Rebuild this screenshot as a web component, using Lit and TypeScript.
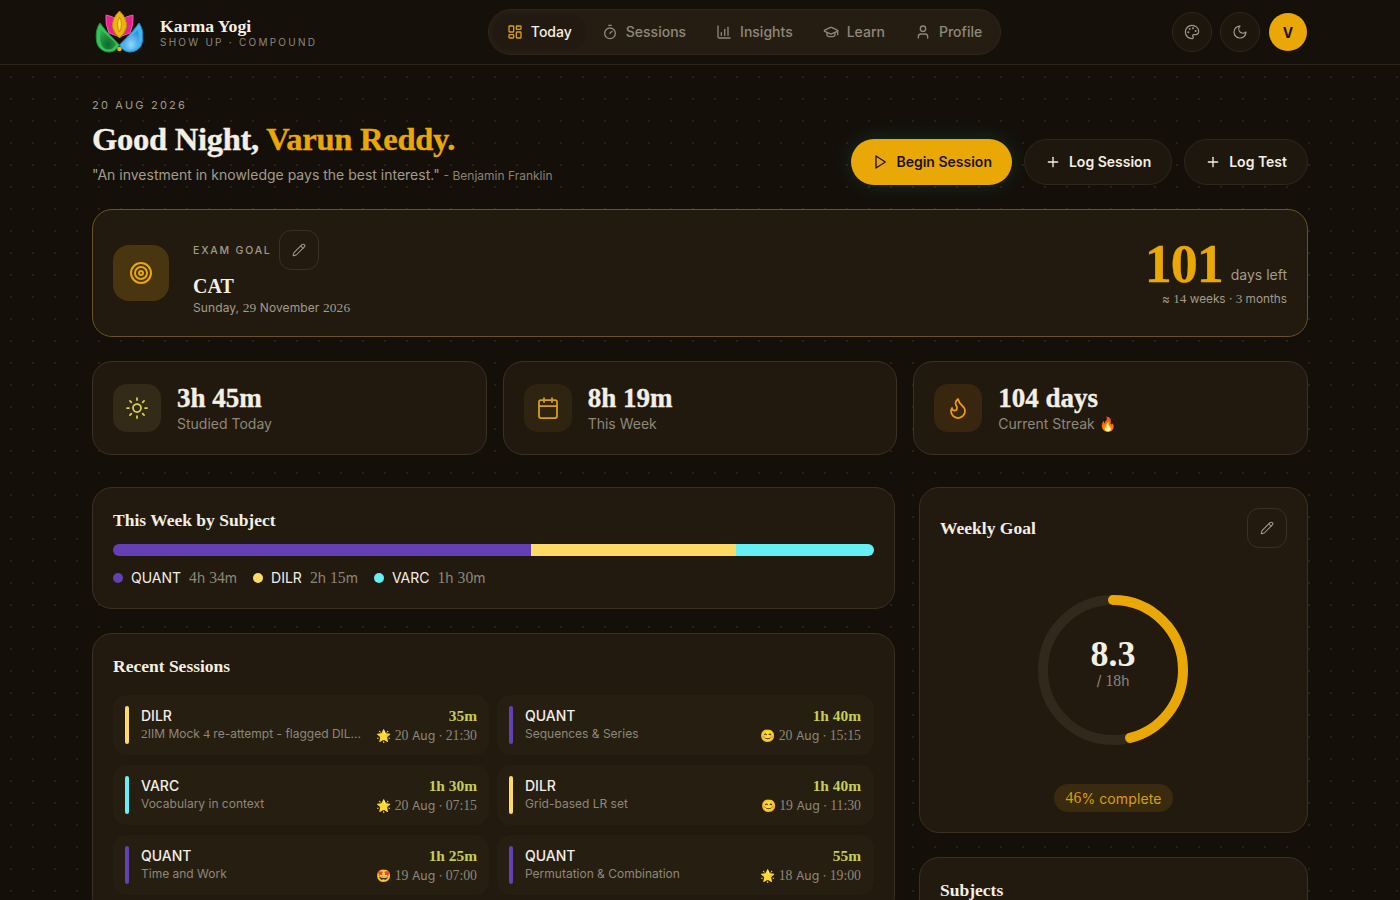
import { LitElement, html, css, svg } from "lit";
import { customElement } from "lit/decorators.js";

const ic = (body: unknown, size = 16, sw = 2) => html`<svg class="ic" width=${size} height=${size} viewBox="0 0 24 24" fill="none" stroke="currentColor" stroke-width=${sw} stroke-linecap="round" stroke-linejoin="round">${body}</svg>`;

const I = {
  dash: svg`<rect x="3" y="3" width="7" height="9" rx="1"/><rect x="14" y="3" width="7" height="5" rx="1"/><rect x="14" y="12" width="7" height="9" rx="1"/><rect x="3" y="16" width="7" height="5" rx="1"/>`,
  timer: svg`<line x1="10" x2="14" y1="2" y2="2"/><line x1="12" x2="15" y1="14" y2="11"/><circle cx="12" cy="14" r="8"/>`,
  chart: svg`<path d="M3 3v16a2 2 0 0 0 2 2h16"/><path d="M8 17v-4"/><path d="M13 17V8"/><path d="M18 17V5"/>`,
  cap: svg`<path d="M21.42 10.922a1 1 0 0 0-.019-1.838L12.83 5.18a2 2 0 0 0-1.66 0L2.6 9.08a1 1 0 0 0 0 1.832l8.57 3.908a2 2 0 0 0 1.66 0z"/><path d="M22 10v6"/><path d="M6 12.5V16a6 3 0 0 0 12 0v-3.5"/>`,
  user: svg`<path d="M19 21v-2a4 4 0 0 0-4-4H9a4 4 0 0 0-4 4v2"/><circle cx="12" cy="7" r="4"/>`,
  palette: svg`<path d="M12 22a1 1 0 0 1 0-20 10 9 0 0 1 10 9 5 5 0 0 1-5 5h-2.25a1.75 1.75 0 0 0-1.4 2.8l.3.4a1.75 1.75 0 0 1-1.4 2.8z"/><circle cx="13.5" cy="6.5" r=".6" fill="currentColor"/><circle cx="17.5" cy="10.5" r=".6" fill="currentColor"/><circle cx="6.5" cy="12.5" r=".6" fill="currentColor"/><circle cx="8.5" cy="7.5" r=".6" fill="currentColor"/>`,
  moon: svg`<path d="M12 3a6 6 0 0 0 9 9 9 9 0 1 1-9-9Z"/>`,
  play: svg`<polygon points="6 3 20 12 6 21 6 3"/>`,
  plus: svg`<path d="M5 12h14"/><path d="M12 5v14"/>`,
  pencil: svg`<path d="M21.174 6.812a1 1 0 0 0-3.986-3.987L3.842 16.174a2 2 0 0 0-.5.83l-1.321 4.352a.5.5 0 0 0 .623.622l4.353-1.32a2 2 0 0 0 .83-.497z"/><path d="m15 5 4 4"/>`,
  target: svg`<circle cx="12" cy="12" r="10"/><circle cx="12" cy="12" r="6"/><circle cx="12" cy="12" r="2"/>`,
  sun: svg`<circle cx="12" cy="12" r="4"/><path d="M12 2v2"/><path d="M12 20v2"/><path d="m4.93 4.93 1.41 1.41"/><path d="m17.66 17.66 1.41 1.41"/><path d="M2 12h2"/><path d="M20 12h2"/><path d="m6.34 17.66-1.41 1.41"/><path d="m19.07 4.93-1.41 1.41"/>`,
  cal: svg`<path d="M8 2v4"/><path d="M16 2v4"/><rect x="3" y="4" width="18" height="18" rx="2"/><path d="M3 10h18"/>`,
  flame: svg`<path d="M8.5 14.5A2.5 2.5 0 0 0 11 12c0-1.38-.5-2-1-3-1.072-2.143-.224-4.054 2-6 .5 2.5 2 4.9 4 6.5 2 1.6 3 3.5 3 5.5a7 7 0 1 1-14 0c0-1.153.433-2.294 1-3a2.5 2.5 0 0 0 2.5 2.5z"/>`,
};

const d = (s: string) => s.split(/(\d[\d:]*)/).map((p, i) => (i % 2 ? html`<span class="dg">${p}</span>` : p));

const Logo = () => html`<svg class="logo" width="50" height="44" viewBox="0 0 50 44">
  <defs>
    <radialGradient id="gg" cx=".5" cy=".75" r=".7"><stop offset="0" stop-color="#0f6a2c"/><stop offset="1" stop-color="#2ba548"/></radialGradient>
    <radialGradient id="bg" cx=".5" cy=".75" r=".7"><stop offset="0" stop-color="#8fd8fb"/><stop offset="1" stop-color="#2e93dc"/></radialGradient>
  </defs>
  <path d="M11 5 Q18 6 22 10 L25 27 L14 23 Q10 14 11 5Z" fill="#e3238e" stroke="#f05ab0" stroke-width="1"/>
  <path d="M38 5 Q31 6 27 10 L24 27 L35 23 Q39 14 38 5Z" fill="#e3238e" stroke="#f05ab0" stroke-width="1"/>
  <path d="M24.5 1 Q32 8 31.5 17 Q30 23 24.5 28 Q19 23 17.5 17 Q17 8 24.5 1Z" fill="#edb40e" stroke="#c08a08" stroke-width="1"/>
  <path d="M24.5 7 Q28.5 14 24.5 22 Q20.5 14 24.5 7Z" fill="#f9d93f" stroke="#b9840a" stroke-width=".8"/>
  <path d="M24.5 35 C19 29 12 23 5 13 C1.5 18 .8 23 1.4 30 C2 38 8 42 14 42 C18.5 42 22 39.5 24.5 35Z" fill="#37c257" stroke="#1b8d3a" stroke-width="1"/>
  <path d="M24.5 35 C30 29 37 23 44 13 C47.5 18 48.2 23 47.6 30 C47 38 41 42 35 42 C30.5 42 27 39.5 24.5 35Z" fill="#45b3f2" stroke="#1f82cc" stroke-width="1"/>
  <path d="M21 34 C16 28 10 24 6.5 20 C4.5 25 4.5 30 6 34 C8 38.5 11 39.5 14 39.5 C17 39.5 19.5 37.5 21 34Z" fill="url(#gg)"/>
  <path d="M28 34 C33 28 39 24 42.5 20 C44.5 25 44.5 30 43 34 C41 38.5 38 39.5 35 39.5 C32 39.5 29.5 37.5 28 34Z" fill="url(#bg)"/>
  <circle cx="24.5" cy="39" r="2.3" fill="#edb40e"/>
</svg>`;

const NAV = [
  ["Today", I.dash],
  ["Sessions", I.timer],
  ["Insights", I.chart],
  ["Learn", I.cap],
  ["Profile", I.user],
] as const;

const COL: Record<string, string> = { QUANT: "#6540b5", DILR: "#ffd966", VARC: "#66f0f5" };

const STATS = [
  { v: "3h 45m", l: "Studied Today", i: I.sun, c: "sun", e: "" },
  { v: "8h 19m", l: "This Week", i: I.cal, c: "cal", e: "" },
  { v: "104 days", l: "Current Streak", i: I.flame, c: "fire", e: "🔥" },
];

const SUBJ = [
  { n: "QUANT", t: "4h 34m", w: 418 },
  { n: "DILR", t: "2h 15m", w: 205 },
  { n: "VARC", t: "1h 30m", w: 138 },
];

const SESS = [
  ["DILR", "2IIM Mock 4 re-attempt - flagged DIL...", "35m", "🌟", "20 Aug · 21:30"],
  ["QUANT", "Sequences & Series", "1h 40m", "😊", "20 Aug · 15:15"],
  ["VARC", "Vocabulary in context", "1h 30m", "🌟", "20 Aug · 07:15"],
  ["DILR", "Grid-based LR set", "1h 40m", "😊", "19 Aug · 11:30"],
  ["QUANT", "Time and Work", "1h 25m", "🤩", "19 Aug · 07:00"],
  ["QUANT", "Permutation & Combination", "55m", "🌟", "18 Aug · 19:00"],
];

@customElement("app-root")
export class AppRoot extends LitElement {
  static styles = css`
    :host {
      display: block; height: 900px; overflow: hidden;
      font-family: Inter, "Noto Sans", sans-serif; color: #f4efe4;
      background-color: #140f09;
      background-image: radial-gradient(circle at center, rgba(255, 235, 190, .085) 1px, transparent 1.2px);
      background-size: 22px 22px;
    }
    * { box-sizing: border-box; }
    .ic { display: block; flex: none; }
    .dg { font-family: "Liberation Serif", serif; font-size: 1.12em; }
    .serif { font-family: "Liberation Serif", serif; font-weight: 700; }
    .fat { -webkit-text-stroke: .35px currentColor; }

    header { height: 65px; background: #15100a; border-bottom: 1px solid #2c2518; padding: 0 92px; display: flex; align-items: center; justify-content: space-between; }
    .brand { display: flex; align-items: center; gap: 15px; padding-left: 3px; width: 225px; }
    .logo { flex: none; }
    .brand-t { display: flex; flex-direction: column; }
    .brand-n { font-size: 17.7px; line-height: 20px; color: #f4efe4; white-space: nowrap; }
    .brand-s { font-size: 10px; letter-spacing: 2.25px; color: #8f877a; line-height: 14px; margin-top: -1px; white-space: nowrap; }
    nav { display: flex; gap: 2px; padding: 4px; height: 46px; border: 1px solid #2f2719; border-radius: 23px; background: #251d12; }
    .ni { display: flex; align-items: center; gap: 8px; height: 36px; padding: 0 14px; border-radius: 18px; font-size: 14px; font-weight: 500; color: #8f877a; }
    .ni span { margin-bottom: 2px; }
    .ni.on { color: #f4efe4; background: #221a10; }
    .ni.on .ic { color: #d9a017; }
    .hr { display: flex; gap: 8px; align-items: center; }
    .cb { width: 40px; height: 40px; border-radius: 50%; border: 1px solid #2f2719; background: #1c160d; color: #a39b8c; display: flex; align-items: center; justify-content: center; }
    .av { width: 38px; height: 38px; margin: 0 1px; border-radius: 50%; background: #eaa807; color: #1a1206; font-weight: 700; font-size: 14px; display: flex; align-items: center; justify-content: center; }

    main { padding: 32px 92px 0; }
    .hero { display: flex; justify-content: space-between; align-items: flex-end; height: 88px; margin-bottom: 24px; }
    .intro { margin-bottom: -1px; }
    .date { font-size: 11px; letter-spacing: 2.2px; color: #a39b8c; line-height: 16px; }
    h1 { margin: 4px 0 0; font-size: 32.6px; line-height: 44px; letter-spacing: -.3px; color: #f4efe4; white-space: nowrap; }
    h1 em { font-style: normal; color: #eaa807; }
    .quote { font-size: 14px; line-height: 20px; margin-top: 4px; color: #a39b8c; }
    .quote small { font-size: 12px; color: #8a8276; }
    .acts { display: flex; gap: 12px; }
    .btn { height: 46px; display: flex; align-items: center; gap: 8px; padding: 0 20px; border-radius: 23px; font-size: 14px; font-weight: 600; color: #f4efe4; background: #1e170e; border: 1px solid #2f2719; white-space: nowrap; }
    .btn span { margin-bottom: 2px; }
    .btn.p { background: #eaa807; color: #1a1206; border: none; padding: 0 20px 0 21px; box-shadow: 0 0 20px rgba(30, 180, 150, .2); }

    .card { background: #221a0e; border: 1px solid #3a3122; border-radius: 20px; }
    .goal { height: 128px; padding: 20px; border-color: #6a5226; display: flex; justify-content: space-between; align-items: center; margin-bottom: 24px; }
    .gl { display: flex; gap: 24px; align-items: center; }
    .gi { width: 56px; height: 56px; border-radius: 16px; background: #493510; color: #eaa807; display: flex; align-items: center; justify-content: center; }
    .gt { display: flex; align-items: center; gap: 7px; font-size: 10.5px; font-weight: 500; letter-spacing: 1.8px; color: #a39b8c; }
    .eb { width: 40px; height: 40px; border-radius: 12px; border: 1px solid #3a3122; color: #a39b8c; display: flex; align-items: center; justify-content: center; flex: none; }
    .gn { font-size: 20px; line-height: 28px; margin-top: 2px; color: #f4efe4; }
    .gd { font-size: 12px; letter-spacing: .1px; line-height: 16px; color: #a39b8c; }
    .gr { text-align: right; }
    .cnt { display: flex; height: 50px; align-items: flex-end; justify-content: flex-end; gap: 8px; font-size: 14px; color: #a39b8c; }
    .cnt b { font-size: 54px; line-height: 50px; color: #eaa807; letter-spacing: -1px; }
    .cnt span { line-height: 20px; margin-bottom: 4px; }
    .gw { font-size: 11.8px; color: #a39b8c; line-height: 16px; margin-top: 2px; }

    .stats { display: grid; grid-template-columns: repeat(3, 1fr); gap: 16px; margin-bottom: 32px; }
    .st { height: 94px; display: flex; align-items: center; gap: 16px; padding: 0 20px; background: #21190e; }
    .si { width: 48px; height: 48px; border-radius: 14px; display: flex; align-items: center; justify-content: center; flex: none; }
    .si.sun { background: #332b17; color: #d9d24f; }
    .si.cal { background: #2e2410; color: #d9a017; }
    .si.fire { background: #38260e; color: #ef9a17; }
    .sv { font-size: 27px; line-height: 32px; color: #f4efe4; }
    .sl { font-size: 14px; line-height: 20px; color: #8f877a; white-space: nowrap; }

    .cols { display: grid; grid-template-columns: 1fr 389px; gap: 24px; align-items: start; }
    .left, .right { display: flex; flex-direction: column; gap: 24px; }
    .pad { padding: 20px; }
    .ct { font-size: 17.5px; line-height: 24px; color: #f4efe4; }
    .bar { display: flex; height: 12px; border-radius: 6px; overflow: hidden; margin-top: 12px; }
    .bar i { display: block; height: 100%; }
    .leg { display: flex; gap: 16px; margin-top: 12px; font-size: 14px; line-height: 20px; align-items: center; }
    .lg { display: flex; align-items: center; gap: 8px; }
    .lg > i { width: 10px; height: 10px; border-radius: 50%; }
    .lg span.v { color: #8f877a; }
    .sess { display: grid; grid-template-columns: 376px 377px; gap: 10px 8px; margin-top: 17px; }
    .row { height: 60px; padding: 0 12px; border-radius: 14px; background: rgba(255, 240, 210, .018); display: flex; gap: 12px; align-items: center; min-width: 0; }
    .row:nth-child(even) { padding-right: 13px; }
    .rb { width: 4px; height: 38px; border-radius: 2px; flex: none; }
    .rm { flex: 1; min-width: 0; padding-bottom: 1px; }
    .rs { font-size: 14px; font-weight: 500; line-height: 18px; color: #f4efe4; }
    .rn { font-size: 12px; line-height: 16px; margin-top: 1px; color: #8f877a; white-space: nowrap; }
    .rr { text-align: right; flex: none; padding-top: 1px; }
    .rt { font-size: 15.4px; line-height: 18px; color: #c4cf56; }
    .rd { font-size: 12.3px; line-height: 18px; margin-top: 2px; color: #8f877a; white-space: nowrap; }

    .wk { height: 346px; display: flex; flex-direction: column; align-items: center; }
    .wh { align-self: stretch; display: flex; justify-content: space-between; align-items: center; }
    .ring { position: relative; width: 150px; height: 150px; margin: 47px 1px 0 0; }
    .ring svg { display: block; }
    .rc { position: absolute; inset: 0; display: flex; flex-direction: column; align-items: center; justify-content: center; padding-bottom: 15px; }
    .rv { font-size: 36px; line-height: 36px; color: #f4efe4; }
    .rh { font-size: 14px; line-height: 18px; color: #8f877a; }
    .pill { margin-top: 39px; height: 28px; padding: 0 12px; border-radius: 14px; background: #3a2b0e; color: #d99e0a; font-size: 14px; letter-spacing: .1px; display: flex; align-items: center; white-space: pre; }
    .sub { height: 200px; padding-top: 20px; }
  `;

  render() {
    const C = 2 * Math.PI * 70;
    return html`
      <header>
        <div class="brand">
          ${Logo()}
          <div class="brand-t">
            <div class="brand-n serif">Karma Yogi</div>
            <div class="brand-s">SHOW UP · COMPOUND</div>
          </div>
        </div>
        <nav>
          ${NAV.map(([n, i], k) => html`<div class="ni ${k === 0 ? "on" : ""}">${ic(i)}<span>${n}</span></div>`)}
        </nav>
        <div class="hr">
          <div class="cb">${ic(I.palette, 16, 1.75)}</div>
          <div class="cb">${ic(I.moon, 16, 1.75)}</div>
          <div class="av">V</div>
        </div>
      </header>
      <main>
        <section class="hero">
          <div class="intro">
            <div class="date">20 AUG 2026</div>
            <h1 class="serif fat">Good Night, <em>Varun Reddy.</em></h1>
            <div class="quote">"An investment in knowledge pays the best interest." <small>- Benjamin Franklin</small></div>
          </div>
          <div class="acts">
            <div class="btn p">${ic(I.play)}<span>Begin Session</span></div>
            <div class="btn">${ic(I.plus)}<span>Log Session</span></div>
            <div class="btn">${ic(I.plus)}<span>Log Test</span></div>
          </div>
        </section>

        <section class="card goal">
          <div class="gl">
            <div class="gi">${ic(I.target, 24)}</div>
            <div>
              <div class="gt"><span>EXAM GOAL</span><div class="eb">${ic(I.pencil, 14, 1.75)}</div></div>
              <div class="gn serif">CAT</div>
              <div class="gd">${d("Sunday, 29 November 2026")}</div>
            </div>
          </div>
          <div class="gr">
            <div class="cnt"><b class="serif fat">101</b><span>days left</span></div>
            <div class="gw">≈ ${d("14 weeks · 3 months")}</div>
          </div>
        </section>

        <section class="stats">
          ${STATS.map(s => html`<div class="card st">
            <div class="si ${s.c}">${ic(s.i, 24, 1.75)}</div>
            <div>
              <div class="sv serif fat">${s.v}</div>
              <div class="sl">${s.l}${s.e ? " " + s.e : ""}</div>
            </div>
          </div>`)}
        </section>

        <section class="cols">
          <div class="left">
            <div class="card pad">
              <div class="ct serif">This Week by Subject</div>
              <div class="bar">${SUBJ.map(s => html`<i style="width:${s.w}px;background:${COL[s.n]}"></i>`)}</div>
              <div class="leg">${SUBJ.map(s => html`<div class="lg"><i style="background:${COL[s.n]}"></i><span>${s.n}</span><span class="v">${d(s.t)}</span></div>`)}</div>
            </div>
            <div class="card pad">
              <div class="ct serif">Recent Sessions</div>
              <div class="sess">
                ${SESS.map(([a, b, t, e, w]) => html`<div class="row">
                  <div class="rb" style="background:${COL[a]}"></div>
                  <div class="rm"><div class="rs">${a}</div><div class="rn">${d(b)}</div></div>
                  <div class="rr"><div class="rt serif">${t}</div><div class="rd">${e} ${d(w)}</div></div>
                </div>`)}
              </div>
            </div>
          </div>
          <div class="right">
            <div class="card pad wk">
              <div class="wh"><div class="ct serif">Weekly Goal</div><div class="eb">${ic(I.pencil, 14, 1.75)}</div></div>
              <div class="ring">
                <svg width="150" height="150" viewBox="0 0 150 150">
                  <circle cx="75" cy="75" r="70" fill="none" stroke="#31291b" stroke-width="10"/>
                  <circle cx="75" cy="75" r="70" fill="none" stroke="#eaa807" stroke-width="10" stroke-linecap="round" stroke-dasharray="${C * 0.46} ${C}" transform="rotate(-90 75 75)"/>
                </svg>
                <div class="rc"><div class="rv serif">8.3</div><div class="rh">/ ${d("18")}h</div></div>
              </div>
              <div class="pill">${d("46")}% complete</div>
            </div>
            <div class="card pad sub"><div class="ct serif">Subjects</div></div>
          </div>
        </section>
      </main>
    `;
  }
}
